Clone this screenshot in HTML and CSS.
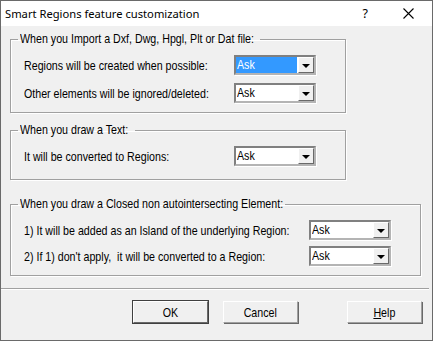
FILE: index.html
```html
<!DOCTYPE html>
<html lang="en">
<head>
    <meta charset="UTF-8">
    <title>Smart Regions feature customization</title>
    <link rel="stylesheet" href="styles.css">
</head>
<body>
<div class="window">
    <div class="titlebar">
        <span class="caption">Smart Regions feature customization</span>
        <span class="help-q">?</span>
        <svg class="close-x" width="11" height="11" viewBox="0 0 11 11">
            <path d="M0.5 0.5 L10.5 10.5 M10.5 0.5 L0.5 10.5" stroke="#000" stroke-width="1.1" fill="none"/>
        </svg>
    </div>

    <fieldset class="group g1">
        <legend><span class="n">When you Import a Dxf, Dwg, Hpgl, Plt or Dat file:</span></legend>
        <div class="row">
            <label class="n">Regions will be created when possible:</label>
            <div class="combo selected"><span class="val"><span class="n">Ask</span></span><span class="drop"><i></i></span></div>
        </div>
        <div class="row">
            <label class="n">Other elements will be ignored/deleted:</label>
            <div class="combo"><span class="val"><span class="n">Ask</span></span><span class="drop"><i></i></span></div>
        </div>
    </fieldset>

    <fieldset class="group g2">
        <legend><span class="n">When you draw a Text:</span></legend>
        <div class="row">
            <label class="n">It will be converted to Regions:</label>
            <div class="combo"><span class="val"><span class="n">Ask</span></span><span class="drop"><i></i></span></div>
        </div>
    </fieldset>

    <fieldset class="group g3">
        <legend><span class="n">When you draw a Closed non autointersecting Element:</span></legend>
        <div class="row">
            <label class="n">1) It will be added as an Island of the underlying Region:</label>
            <div class="combo"><span class="val"><span class="n">Ask</span></span><span class="drop"><i></i></span></div>
        </div>
        <div class="row">
            <label class="n">2) If 1) don't apply,&nbsp; it will be converted to a Region:</label>
            <div class="combo"><span class="val"><span class="n">Ask</span></span><span class="drop"><i></i></span></div>
        </div>
    </fieldset>

    <div class="separator"></div>

    <div class="buttons">
        <button class="btn default"><span class="n">OK</span></button>
        <button class="btn cancel"><span class="n">Cancel</span></button>
        <button class="btn help"><span class="n"><u>H</u>elp</span></button>
    </div>
</div>
</body>
</html>
```

FILE: styles.css
```css
body { margin: 0; font-family: "Liberation Sans", Arial, sans-serif; font-size: 13px; color: #000; }
.n { display: inline-block; white-space: nowrap; transform: scaleX(0.82); transform-origin: left center; }
.window { width: 433px; height: 341px; box-sizing: border-box; border: 1px solid #6a6a6a; background: #f0f0f0; }
.titlebar { height: 25px; background: #fff; display: flex; align-items: center; font-family: "Noto Sans", sans-serif; font-size: 11.2px; }
.caption { margin-left: 4px; flex: 1; }
.help-q { margin-right: 35px; font-size: 12.5px; }
.close-x { margin-right: 18px; }

.group { margin: 6px 0 0 9px; padding: 0 0 9px 13px; border: 1px solid #a0a0a0; box-shadow: 1px 1px 0 #fff, inset 1px 1px 0 #fff; }
.group legend { margin-left: -6px; padding: 0 2px; line-height: 14px; box-sizing: border-box; }
.g1 { width: 321px; }
.g1 legend { width: 242px; }
.g2 { width: 321px; margin-top: 10px; padding-bottom: 13px; }
.g2 legend { width: 117px; }
.g3 { width: 396px; margin-top: 17px; }
.g3 legend { width: 267px; }
.row { display: grid; grid-template-columns: 210px 82px; align-items: center; height: 20px; margin-top: 8px; }
.row:first-of-type { margin-top: 9px; }
.g3 .row { grid-template-columns: 285px 82px; margin-top: 6px; }
.g3 .row:first-of-type { margin-top: 9px; }

.combo { height: 20px; box-sizing: border-box; border: 2px solid; border-color: #808080 #b4b4b4 #b4b4b4 #808080; background: #fff; display: flex; box-shadow: 1px 1px 0 #fff; }
.combo .val { flex: 1; line-height: 16px; padding-left: 1px; }
.combo.selected .val { background: #3399ff; color: #fff; margin-right: 1px; }
.drop { width: 16px; height: 16px; box-sizing: border-box; background: #f0f0f0; border: 1px solid; border-color: #fff #696969 #696969 #fff; display: flex; align-items: center; justify-content: center; }
.drop i { width: 0; height: 0; border-left: 4px solid transparent; border-right: 4px solid transparent; border-top: 4px solid #000; margin-top: 1px; }

.separator { margin: 12px 3px 0 0; border-top: 1px solid #a0a0a0; border-bottom: 1px solid #fff; }
.buttons { display: flex; margin-top: 11px; padding-left: 132px; }
.btn { width: 75px; height: 22px; font: inherit; background: #f0f0f0; padding: 0; border: 1px solid; border-color: #fff #a0a0a0 #a0a0a0 #fff; box-shadow: 1px 1px 0 #696969; }
.btn .n { transform-origin: center; }
.btn.default { border-color: #fff #696969 #696969 #fff; box-shadow: 0 0 0 1px #404040; }
.btn.cancel { margin-left: 15px; }
.btn.help { margin-left: 49px; }
.btn u { text-decoration: underline; }
```
